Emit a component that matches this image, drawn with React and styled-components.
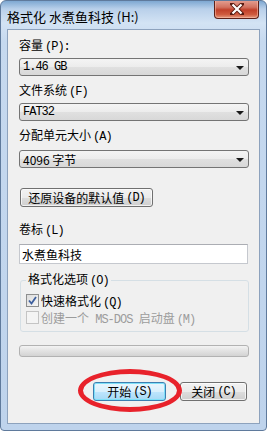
import React from 'react';
import styled, { createGlobalStyle } from 'styled-components';

const GlobalStyle = createGlobalStyle`
  html, body { margin: 0; padding: 0; background: #ffffff; }
  body { font-family: "Noto Sans CJK SC", "Liberation Sans", sans-serif; }
`;

const CJK = `"Noto Sans CJK SC", "Liberation Sans", sans-serif`;

// Window frame
const Window = styled.div`
  box-sizing: border-box;
  width: 267px;
  height: 431px;
  display: flex;
  flex-direction: column;
  border: 1px solid #5f7a9c;
  border-radius: 6px 6px 4px 4px;
  background: linear-gradient(to bottom, #7ea8d2 0, #b9d0ea 8px, #d3e3f4 22px, #c6d9ef 40px, #bed3ec 100%);
  padding: 0 6px 6px 6px;
  overflow: hidden;
`;

const TitleBar = styled.div`
  height: 28px;
  display: flex;
  align-items: flex-start;
  justify-content: space-between;
`;

const Title = styled.div`
  font-family: ${CJK};
  font-size: 13px;
  line-height: 15px;
  color: #000;
  margin-top: 8px;
  white-space: nowrap;
`;

const CloseButton = styled.div`
  width: 45px;
  height: 19px;
  margin-top: -1px;
  margin-right: 1px;
  box-sizing: border-box;
  border: 1px solid #5d2018;
  border-top: none;
  border-radius: 0 0 4px 4px;
  background: linear-gradient(to bottom, #e6a295 0, #d27260 40%, #c1402a 55%, #cf5a3e 80%, #e49a80 100%);
  box-shadow: inset 0 0 0 1px rgba(255, 200, 180, 0.5);
  display: flex;
  align-items: center;
  justify-content: center;
`;

// Client area
const Client = styled.div`
  flex: 1;
  display: flex;
  flex-direction: column;
  border: 1px solid #8da2bd;
  background: #f0f0f0;
  padding: 0 10px 0 11px;
`;

const Label = styled.div`
  font-family: ${CJK};
  font-size: 12px;
  line-height: 14px;
  color: #000;
  margin-top: ${p => p.$mt}px;
  white-space: nowrap;
`;

const Combo = styled.div`
  box-sizing: border-box;
  height: 18px;
  margin-top: ${p => p.$mt}px;
  border: 1px solid #747474;
  border-radius: 3px;
  background: linear-gradient(to bottom, #f4f4f4 0, #ececec 50%, #e0e0e0 51%, #d8d8d8 100%);
  display: flex;
  align-items: center;
  justify-content: space-between;
  padding: 0 4px 0 3px;
  font-family: ${CJK};
  font-size: 12px;
  color: #000;
`;

const Mono = styled.span`
  font-family: "Liberation Mono", "Noto Sans CJK SC", monospace;
  font-size: 12px;
  letter-spacing: -1px;
  white-space: pre;
`;

// mnemonic like (P) drawn half-width, as the bitmap font does
const Key = styled.span`
  font-family: "Liberation Mono", monospace;
  font-size: 12px;
  letter-spacing: -1px;
  margin-left: 2px;
`;

const Arrow = styled.span`
  width: 0;
  height: 0;
  border-left: 4px solid transparent;
  border-right: 4px solid transparent;
  border-top: 4px solid #1a1a1a;
  margin-top: 1px;
`;

const Button = styled.div`
  box-sizing: border-box;
  height: 19px;
  width: ${p => p.$w}px;
  margin-top: ${p => p.$mt || 0}px;
  margin-left: ${p => p.$ml || 0}px;
  border: 1px solid ${p => (p.$focus ? '#3c7fb1' : '#707070')};
  border-radius: 3px;
  background: ${p =>
    p.$focus
      ? 'linear-gradient(to bottom, #eaf6fd 0, #d9f0fc 50%, #bee6fd 51%, #a7d9f5 100%)'
      : 'linear-gradient(to bottom, #f2f2f2 0, #ebebeb 50%, #dddddd 51%, #cfcfcf 100%)'};
  box-shadow: inset 0 0 0 1px ${p => (p.$focus ? '#7fe0f8' : 'rgba(255,255,255,0.7)')};
  display: flex;
  align-items: center;
  justify-content: center;
  font-family: ${CJK};
  font-size: 12px;
  color: #000;
  white-space: nowrap;
`;

const TextBox = styled.div`
  box-sizing: border-box;
  height: 20px;
  width: 229px;
  margin-top: 6px;
  border: 1px solid #c5c8ce;
  border-top-color: #abadb3;
  background: #fff;
  display: flex;
  align-items: center;
  padding-left: 2px;
  font-family: ${CJK};
  font-size: 12px;
  color: #000;
`;

const Group = styled.fieldset`
  margin: 8px 0 0 1px;
  width: 229px;
  min-width: 0;
  box-sizing: border-box;
  border: 1px solid #d5dfe5;
  border-radius: 3px;
  padding: 4px 5px 5px 5px;
`;

const Legend = styled.legend`
  font-family: ${CJK};
  font-size: 12px;
  line-height: 14px;
  padding: 0 2px;
  color: #000;
`;

const CheckRow = styled.div`
  height: 17px;
  display: flex;
  align-items: center;
  gap: 2px;
  font-family: ${CJK};
  font-size: 12px;
  color: ${p => (p.$disabled ? '#9c9c9c' : '#000')};
  white-space: pre;
`;

const Box = styled.span`
  box-sizing: border-box;
  width: 13px;
  height: 13px;
  border: 1px solid ${p => (p.$disabled ? '#c4c4c4' : '#8e8f8f')};
  background: ${p =>
    p.$disabled ? '#f4f4f4' : 'linear-gradient(135deg, #dcdcdc 0, #f6f6f6 100%)'};
  display: flex;
  align-items: center;
  justify-content: center;
`;

const Progress = styled.div`
  box-sizing: border-box;
  height: 12px;
  margin-top: 13px;
  border: 1px solid #b2b2b2;
  border-radius: 3px;
  background: linear-gradient(to bottom, #f3f3f3 0, #e2e2e2 50%, #d3d3d3 100%);
`;

const ButtonRow = styled.div`
  position: relative;
  margin-top: 25px;
  display: flex;
  padding-left: 74px;
`;

const Ring = styled.div`
  position: absolute;
  left: 59px;
  top: -13px;
  width: 104px;
  height: 43px;
  box-sizing: border-box;
  border: 5px solid #e8222b;
  border-radius: 50%;
  z-index: 2;
  pointer-events: none;
`;

const CloseX = () => (
  <svg width="14" height="12" viewBox="0 0 14 12">
    <path d="M2 1 L12 11 M12 1 L2 11" stroke="#5a1c12" strokeWidth="4" strokeLinecap="square" />
    <path d="M2.5 1.5 L11.5 10.5 M11.5 1.5 L2.5 10.5" stroke="#ffffff" strokeWidth="2.2" />
  </svg>
);

const Tick = () => (
  <svg width="9" height="9" viewBox="0 0 9 9">
    <path d="M1 4.5 L3.5 7.5 L8 1" fill="none" stroke="#3d5f9e" strokeWidth="1.8" />
  </svg>
);

export default function App() {
  return (
    <>
      <GlobalStyle />
      <Window>
        <TitleBar>
          <Title>格式化 水煮鱼科技 (H:)</Title>
          <CloseButton><CloseX /></CloseButton>
        </TitleBar>
        <Client>
          <Label $mt={8}>容量<Key>(P):</Key></Label>
          <Combo $mt={4}><Mono>1.46 GB</Mono><Arrow /></Combo>
          <Label $mt={7}>文件系统<Key>(F)</Key></Label>
          <Combo $mt={4}><Mono>FAT32</Mono><Arrow /></Combo>
          <Label $mt={7}>分配单元大小<Key>(A)</Key></Label>
          <Combo $mt={6}><span>4096 字节</span><Arrow /></Combo>
          <Button $w={133} $mt={20} $ml={1}>还原设备的默认值<Key>(D)</Key></Button>
          <Label $mt={15}>卷标<Key>(L)</Key></Label>
          <TextBox>水煮鱼科技</TextBox>
          <Group>
            <Legend>格式化选项<Key>(O)</Key></Legend>
            <CheckRow><Box><Tick /></Box><span>快速格式化<Key>(Q)</Key></span></CheckRow>
            <CheckRow $disabled>
              <Box $disabled />
              <span>创建一个<Mono>{' MS-DOS '}</Mono>启动盘<Key>(M)</Key></span>
            </CheckRow>
          </Group>
          <Progress />
          <ButtonRow>
            <Ring />
            <Button $w={73} $focus>开始<Key>(S)</Key></Button>
            <Button $w={67} $ml={14}>关闭<Key>(C)</Key></Button>
          </ButtonRow>
        </Client>
      </Window>
    </>
  );
}
